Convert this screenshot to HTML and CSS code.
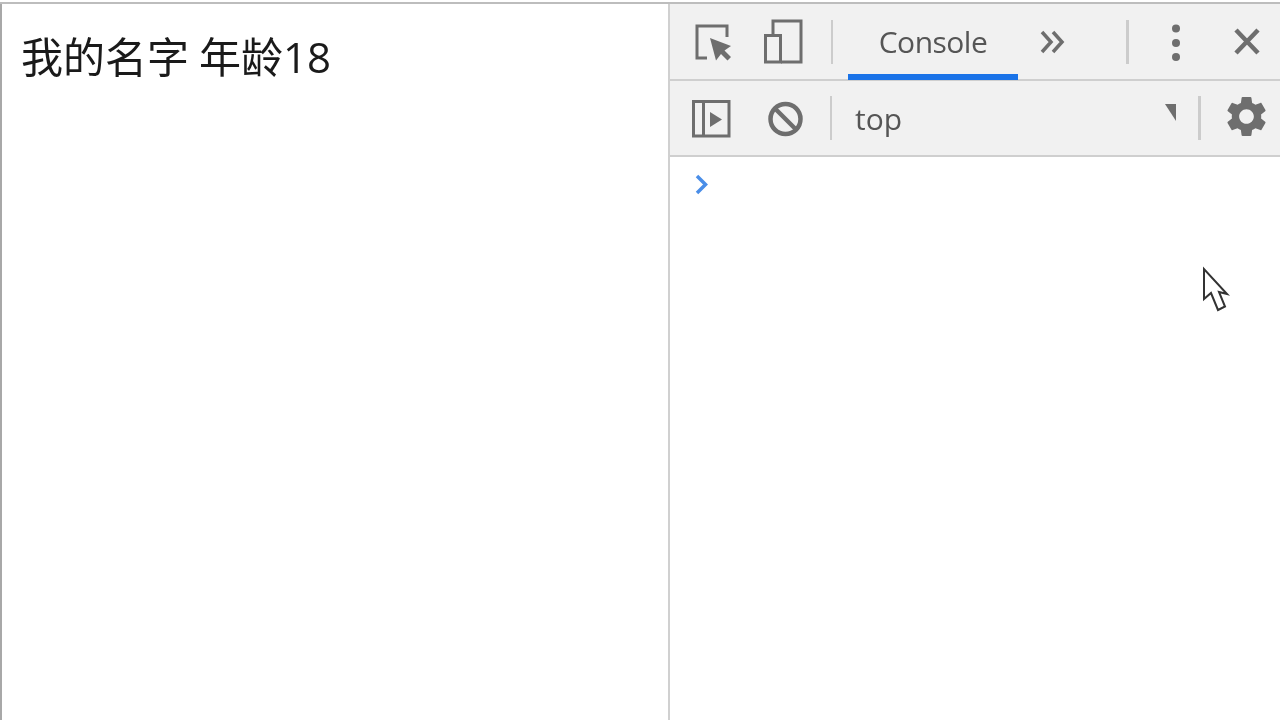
FILE: index.html
```html
<!DOCTYPE html>
<html lang="zh">
<head>
<meta charset="utf-8">
<title>Console</title>
<link rel="stylesheet" href="styles.css">
</head>
<body>
<div class="window">
  <main class="page"><p class="greeting">我的名字 年龄18</p></main>
  <section class="devtools">
    <div class="toolbar">
      <svg class="icon inspect" width="40" height="44" viewBox="694 19 40 44"><path class="line" d="M707 57H697V25H727V36"/><path class="fill" d="M710 37L731 45L724.500 49.500L731 56L727.500 59.500L721 53L716 59.500Z"/></svg>
      <svg class="icon device" width="42" height="46" viewBox="762 18 42 46"><path class="line" d="M773 33V20H801V61H781"/><rect class="line" x="765.500" y="34.500" width="15" height="26.500"/></svg>
      <span class="sep sep-first"></span>
      <div class="tab">Console</div>
      <svg class="icon more" width="26" height="24" viewBox="1040 29 26 24"><path class="line thick" d="M1042 31L1051 41L1042 51M1053 31L1062 41L1053 51"/></svg>
      <span class="sep sep-tabs"></span>
      <svg class="icon kebab" width="10" height="40" viewBox="1171 21 10 40"><circle class="fill" cx="1176" cy="27.500" r="4"/><circle class="fill" cx="1176" cy="42" r="4"/><circle class="fill" cx="1176" cy="56" r="4"/></svg>
      <svg class="icon close" width="28" height="28" viewBox="1233 27 28 28"><path class="line x" d="M1236 29L1258 52M1258 29L1236 52"/></svg>
    </div>
    <div class="toolbar toolbar-second">
      <svg class="icon panel" width="40" height="40" viewBox="691 99 40 40"><path class="line" d="M693.500 101.500H729V136H693.500ZM703.500 101.500V136"/><path class="fill" d="M710 112L722 119.500L710 127Z"/></svg>
      <svg class="icon block" width="36" height="40" viewBox="767 98 36 40"><circle class="line x" cx="785.500" cy="118" r="15"/><path class="line x" d="M775 107.500L796 128.500"/></svg>
      <span class="sep sep-first"></span>
      <div class="context">top</div>
      <svg class="icon caret" width="12" height="18" viewBox="1166 108 12 18"><path class="fill" d="M1166 108H1177V125Z"/></svg>
      <span class="sep sep-gear"></span>
      <svg class="icon gear" width="49" height="49" viewBox="0 0 24 24"><path class="fill" d="M19.14 12.94c.04-.3.06-.61.06-.94 0-.32-.02-.64-.07-.94l2.03-1.58c.18-.14.23-.41.12-.61l-1.92-3.32c-.12-.22-.37-.29-.59-.22l-2.39.96c-.5-.38-1.03-.7-1.62-.94l-.36-2.54c-.04-.24-.24-.41-.48-.41h-3.84c-.24 0-.43.17-.47.41l-.36 2.54c-.59.24-1.13.57-1.62.94l-2.39-.96c-.22-.08-.47 0-.59.22L2.74 8.87c-.12.21-.08.47.12.61l2.03 1.58c-.05.3-.09.63-.09.94s.02.64.07.94l-2.03 1.58c-.18.14-.23.41-.12.61l1.92 3.32c.12.22.37.29.59.22l2.39-.96c.5.38 1.03.7 1.62.94l.36 2.54c.05.24.24.41.48.41h3.84c.24 0 .44-.17.47-.41l.36-2.54c.59-.24 1.13-.56 1.62-.94l2.39.96c.22.08.47 0 .59-.22l1.92-3.32c.12-.22.07-.47-.12-.61l-2.01-1.58zM12 15.6c-1.98 0-3.6-1.62-3.6-3.6s1.62-3.6 3.6-3.6 3.6 1.62 3.6 3.6-1.62 3.6-3.6 3.6z"/></svg>
    </div>
    <div class="console">
      <svg class="icon prompt" width="16" height="24" viewBox="693 172 16 24"><path class="chevron" d="M697 176L705.500 184.500L697 193"/></svg>
    </div>
  </section>
</div>
<svg class="cursor" width="30" height="46" viewBox="1200 266 30 46"><path d="M1204 269V299L1211 293L1218 310L1225 306.500L1219 292L1227 294Z"/></svg>
</body>
</html>
```
FILE: styles.css
```css
html, body {
  margin: 0;
  height: 100%;
  background: #fff;
  overflow: hidden;
}
body {
  padding-top: 2px;
  box-sizing: border-box;
}
.window {
  display: flex;
  height: 718px;
  border-top: 2px solid #bdbdbd;
}
.page {
  width: 666px;
  border-left: 2px solid #a8a8a8;
}
.greeting {
  margin: 0;
  padding: 23px 0 0 19px;
  font: 42px/60px "Open Sans", "Noto Sans CJK SC", sans-serif;
  word-spacing: -1px;
  color: #1a1a1a;
  filter: blur(0.3px);
}
.devtools {
  flex: 1;
  display: flex;
  flex-direction: column;
  border-left: 2px solid #d0d0d0;
}
.toolbar {
  display: flex;
  align-items: center;
  height: 75px;
  flex: none;
  background: #f1f1f1;
  border-bottom: 2px solid #cfcfcf;
  font-family: "Open Sans", sans-serif;
  color: #555;
}
.toolbar-second {
  height: 74px;
}
.icon {
  flex: none;
  display: block;
  filter: blur(0.4px);
}
.line {
  fill: none;
  stroke: #6e6e6e;
  stroke-width: 3;
}
.thick {
  stroke-width: 3.5;
}
.x {
  stroke-width: 4.500;
}
.fill {
  fill: #6e6e6e;
}
.inspect { margin-left: 24px; }
.device { margin-left: 28px; }
.sep {
  flex: none;
  width: 2px;
  height: 44px;
  background: #cccccc;
}
.sep-first { margin-left: 27px; }
.tab {
  align-self: stretch;
  width: 170px;
  margin: 0 0 -1px 15px;
  box-sizing: border-box;
  border-bottom: 6px solid #1a73e8;
  display: flex;
  align-items: center;
  justify-content: center;
  font-size: 30px;
  letter-spacing: -0.5px;
  padding-top: 5px;
  filter: blur(0.3px);
}
.more { margin-left: 22px; }
.sep-tabs { margin-left: 60px; width: 3px; }
.kebab { margin-left: 42px; }
.close { margin-left: 52px; }
.panel { margin-left: 21px; margin-top: 1px; }
.block { margin-left: 36px; margin-top: 1px; }
.context {
  margin-left: 23px;
  width: 310px;
  font-size: 30px;
  filter: blur(0.3px);
}
.caret { margin-top: -10px; }
.sep-gear { margin-left: 21px; width: 3px; }
.gear { margin-left: 21px; margin-top: -4px; }
.console {
  flex: 1;
  padding: 15px 0 0 23px;
}
.chevron {
  fill: none;
  stroke: #4a8ee8;
  stroke-width: 3.5;
}
.cursor {
  position: absolute;
  left: 1200px;
  top: 266px;
  filter: blur(0.3px);
}
.cursor path {
  fill: #fff;
  stroke: #333;
  stroke-width: 2;
}
```
